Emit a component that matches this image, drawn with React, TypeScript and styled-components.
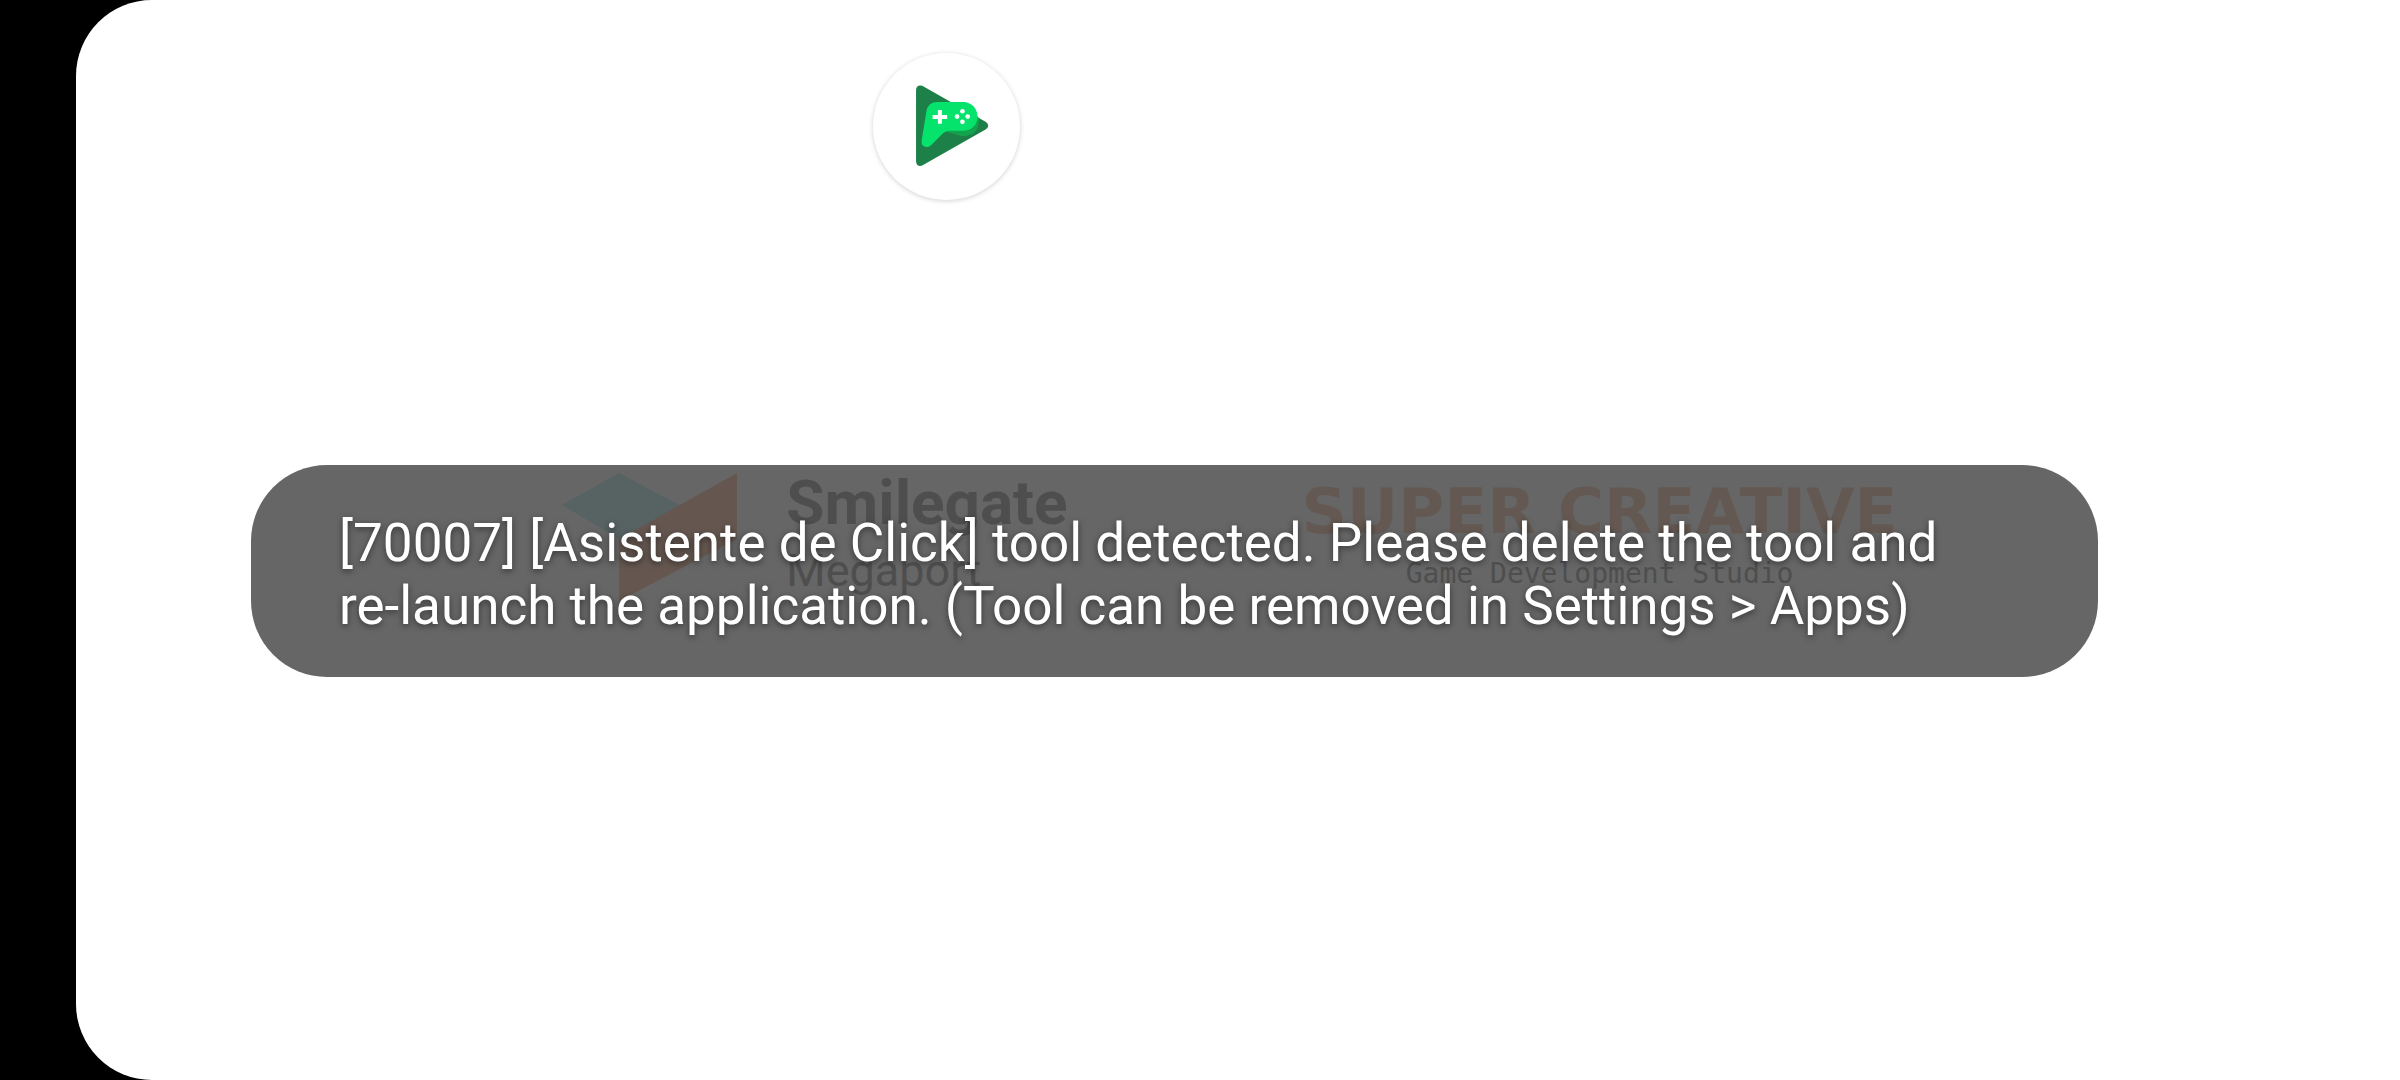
import React from "react";
import styled, { createGlobalStyle } from "styled-components";

const GlobalStyle = createGlobalStyle`
  * {
    box-sizing: border-box;
  }
  body {
    margin: 0;
    background: #000;
    font-family: Roboto, "Liberation Sans", sans-serif;
  }
`;

const Device = styled.div`
  min-height: 100vh;
  padding-left: 76px;
  background: #000;
`;

const Screen = styled.main`
  position: relative;
  display: flex;
  min-height: 100vh;
  align-items: center;
  justify-content: center;
  padding: 0 16px 6px 0;
  border-radius: 76px 0 0 76px;
  background: #fff;
  overflow: hidden;
`;

const GamesBadge = styled.div`
  position: absolute;
  top: 53px;
  left: 34.3%;
  width: 147px;
  height: 147px;
  border-radius: 50%;
  background: #fff;
  box-shadow: 0 1px 5px rgba(0, 0, 0, 0.18);
`;

const BadgeIcon = styled.svg`
  display: block;
  width: 100%;
  height: 100%;
`;

const Splash = styled.div`
  display: flex;
  align-items: flex-start;
  gap: 234px;
`;

const Publisher = styled.section`
  display: flex;
  gap: 48px;
`;

const PublisherMark = styled.svg`
  width: 176px;
  height: 128px;
  flex: none;
`;

const Names = styled.div<{ $align: "left" | "center"; $top: number; $gap: number }>`
  display: flex;
  flex-direction: column;
  gap: ${(p) => p.$gap}px;
  padding-top: ${(p) => p.$top}px;
  text-align: ${(p) => p.$align};
  white-space: nowrap;
`;

const PublisherName = styled.div`
  font: 700 62px/60px Roboto, sans-serif;
  color: #c4c4c4;
`;

const PublisherUnit = styled.div`
  font: 400 45px/60px Roboto, sans-serif;
  color: #c4c4c4;
`;

const StudioName = styled.div`
  font: 700 63px/60px "DejaVu Sans", sans-serif;
  color: #fbdfce;
`;

const StudioTagline = styled.div`
  font: 400 28px/36px "DejaVu Sans Mono", monospace;
  color: #c4c4c4;
`;

const Toast = styled.div`
  position: absolute;
  top: 465px;
  left: 175px;
  right: 302px;
  padding: 47px 88px 39px;
  border-radius: 76px;
  background: rgba(0, 0, 0, 0.6);
  color: #fff;
  font-size: 53px;
  line-height: 63px;
  text-shadow: 0 2px 6px rgba(0, 0, 0, 0.5);
`;

function PlayGamesIcon() {
  return (
    <BadgeIcon viewBox="68 68 444 444" aria-hidden="true">
      <path
        d="M198 181Q198 166 211 166Q216 166 222 170L408 276Q416 281 416 288Q416 294 408 299L222 405Q216 409 211 409Q198 409 198 394Z"
        fill="#1d8048"
      />
      <path
        d="M284 304L335 319Q368 320 381 300Q389 286 388 265L345 216Z"
        fill="#12a34c"
      />
      <path
        d="M229 246Q233 216 263 216H341C365 216 384 236 384 260C384 285 365 303 341 303H301Q287 303 278 312L245 345Q236 354 226 351Q213 348 215 332Z"
        fill="#06e36c"
      />
      <path d="M264 240h12v15h16v12h-16v15h-12v-15h-16v-12h16z" fill="#fff" />
      <g fill="#fff">
        <circle cx="338" cy="244" r="7" />
        <circle cx="322" cy="260" r="7" />
        <circle cx="354" cy="260" r="7" />
        <circle cx="338" cy="276" r="7" />
      </g>
    </BadgeIcon>
  );
}

export default function App() {
  return (
    <Device>
      <GlobalStyle />
      <Screen>
        <Splash>
          <Publisher>
            <PublisherMark viewBox="0 0 176 128" aria-hidden="true">
              <path d="M57 0L119 33L57 66L0 32Z" fill="#daf4f4" />
              <path d="M175 0V66L57 128V66Z" fill="#fdd9c8" />
            </PublisherMark>
            <Names $align="left" $top={0} $gap={8}>
              <PublisherName>Smilegate</PublisherName>
              <PublisherUnit>Megaport</PublisherUnit>
            </Names>
          </Publisher>
          <Names $align="center" $top={9} $gap={14}>
            <StudioName>SUPER CREATIVE</StudioName>
            <StudioTagline>Game Development Studio</StudioTagline>
          </Names>
        </Splash>
        <GamesBadge>
          <PlayGamesIcon />
        </GamesBadge>
        <Toast role="alert">
          [70007] [Asistente de Click] tool detected. Please delete the tool and
          re-launch the application. (Tool can be removed in Settings &gt; Apps)
        </Toast>
      </Screen>
    </Device>
  );
}
